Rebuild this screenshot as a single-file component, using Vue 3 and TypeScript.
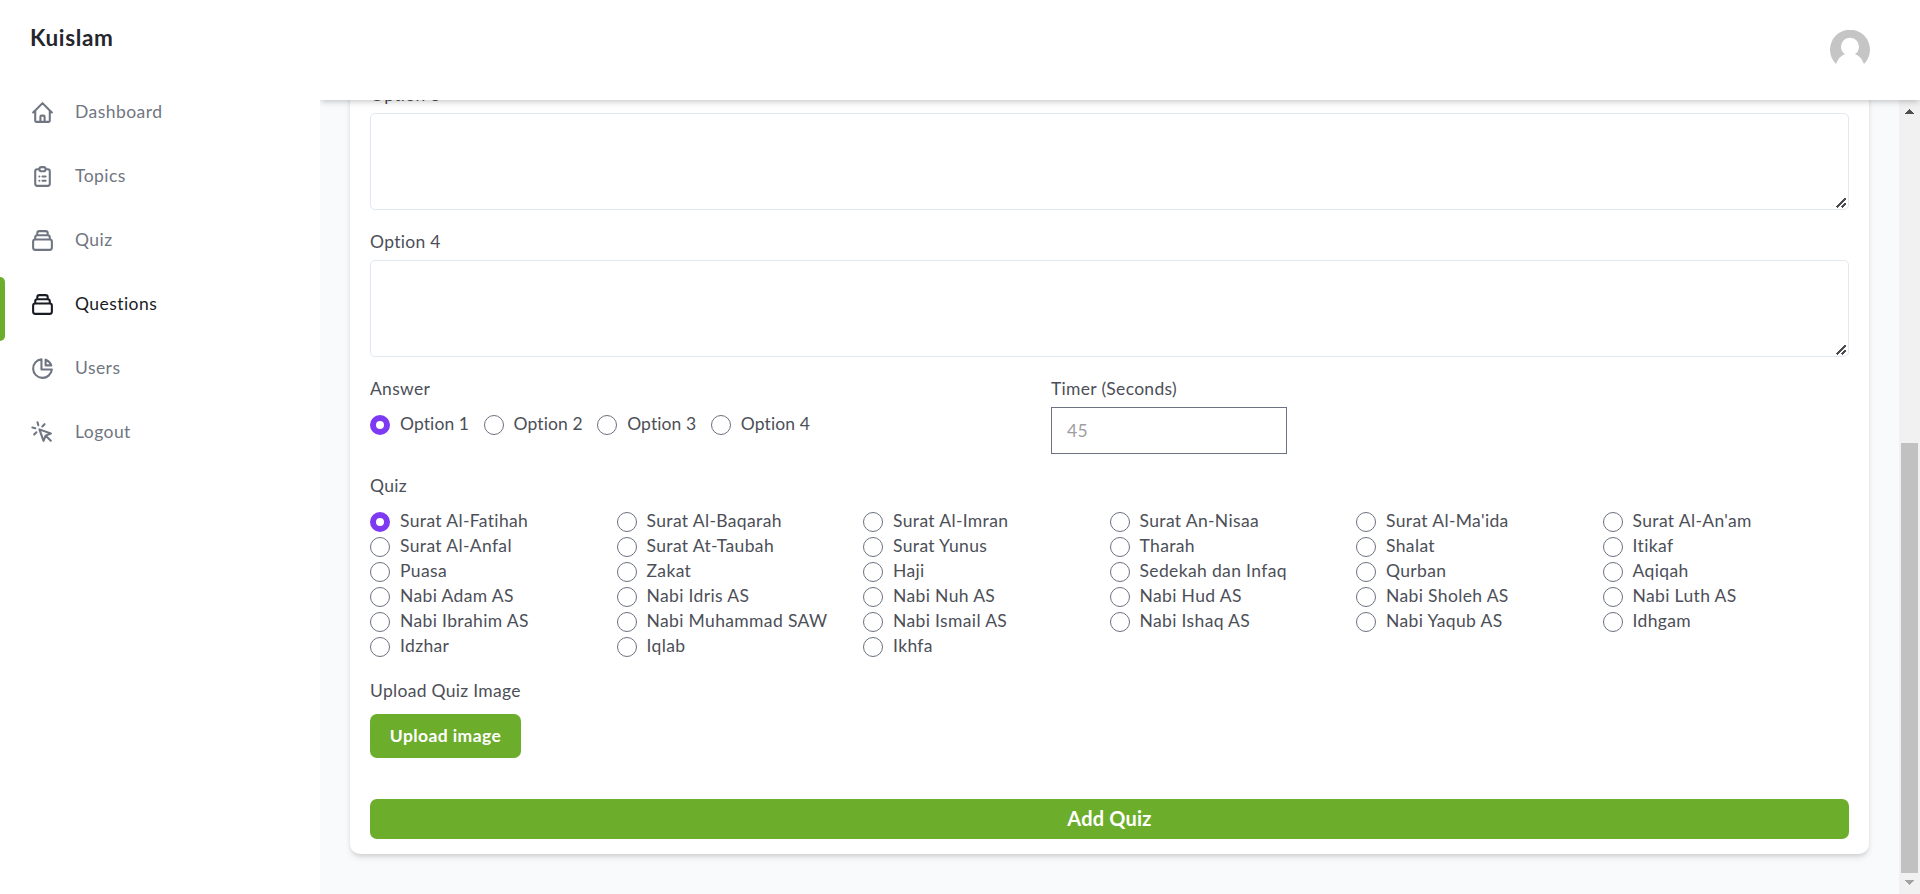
<script setup lang="ts">
import { ref } from 'vue'

interface NavItem {
  label: string
  paths: string[]
}

const collection =
  'M19 11H5m14 0a2 2 0 012 2v6a2 2 0 01-2 2H5a2 2 0 01-2-2v-6a2 2 0 012-2m14 0V9a2 2 0 00-2-2M5 11V9a2 2 0 012-2m0 0V5a2 2 0 012-2h6a2 2 0 012 2v2M7 7h10'

const nav: NavItem[] = [
  {
    label: 'Dashboard',
    paths: [
      'M3 12l2-2m0 0l7-7 7 7M5 10v10a1 1 0 001 1h3m10-11l2 2m-2-2v10a1 1 0 01-1 1h-3m-6 0a1 1 0 001-1v-4a1 1 0 011-1h2a1 1 0 011 1v4a1 1 0 001 1m-6 0h6',
    ],
  },
  {
    label: 'Topics',
    paths: [
      'M9 5H7a2 2 0 00-2 2v12a2 2 0 002 2h10a2 2 0 002-2V7a2 2 0 00-2-2h-2M9 5a2 2 0 002 2h2a2 2 0 002-2M9 5a2 2 0 012-2h2a2 2 0 012 2m-3 7h3m-3 4h3m-6-4h.01M9 16h.01',
    ],
  },
  { label: 'Quiz', paths: [collection] },
  { label: 'Questions', paths: [collection] },
  {
    label: 'Users',
    paths: ['M11 3.055A9.001 9.001 0 1020.945 13H11V3.055z', 'M20.488 9H15V3.512A9.025 9.025 0 0120.488 9z'],
  },
  {
    label: 'Logout',
    paths: [
      'M15 15l-2 5L9 9l11 4-5 2zm0 0l5 5M7.188 2.239l.777 2.897M5.136 7.965l-2.898-.777M13.95 4.05l-2.122 2.122m-5.657 5.656l-2.12 2.122',
    ],
  },
]

const answers = ['Option 1', 'Option 2', 'Option 3', 'Option 4']

const quizzes = [
  'Surat Al-Fatihah', 'Surat Al-Baqarah', 'Surat Al-Imran', 'Surat An-Nisaa', "Surat Al-Ma'ida", "Surat Al-An'am",
  'Surat Al-Anfal', 'Surat At-Taubah', 'Surat Yunus', 'Tharah', 'Shalat', 'Itikaf',
  'Puasa', 'Zakat', 'Haji', 'Sedekah dan Infaq', 'Qurban', 'Aqiqah',
  'Nabi Adam AS', 'Nabi Idris AS', 'Nabi Nuh AS', 'Nabi Hud AS', 'Nabi Sholeh AS', 'Nabi Luth AS',
  'Nabi Ibrahim AS', 'Nabi Muhammad SAW', 'Nabi Ismail AS', 'Nabi Ishaq AS', 'Nabi Yaqub AS', 'Idhgam',
  'Idzhar', 'Iqlab', 'Ikhfa',
]

const active = ref('Questions')
const answer = ref('Option 1')
const quiz = ref('Surat Al-Fatihah')
const options = ref([
  { label: 'Option 3', text: '' },
  { label: 'Option 4', text: '' },
])
const timer = ref('')
</script>

<template>
  <div class="shell">
    <aside class="sidebar">
      <a class="brand">Kuislam</a>
      <ul class="nav">
        <li v-for="item in nav" :key="item.label" class="nav-item" :class="{ active: item.label === active }">
          <span v-if="item.label === active" class="marker"></span>
          <a class="nav-link" @click="active = item.label">
            <svg class="nav-icon" viewBox="0 0 24 24" fill="none" stroke="currentColor" stroke-width="2" stroke-linecap="round" stroke-linejoin="round">
              <path v-for="d in item.paths" :key="d" :d="d" />
            </svg>
            <span class="nav-text">{{ item.label }}</span>
          </a>
        </li>
      </ul>
    </aside>

    <div class="page">
      <header class="topbar">
        <svg class="avatar" viewBox="0 0 40 40">
          <path fill="#c5c5c5" d="M6 34A20 20 0 1 1 34 34Q31 26 25 24.200A9 9 0 1 0 15 24.200Q9 26 6 34Z" />
        </svg>
      </header>

      <div class="body">
        <main class="content">
          <form class="card" @submit.prevent>
            <label v-for="o in options" :key="o.label" class="field">
              <span class="label">{{ o.label }}</span>
              <span class="area-wrap">
                <textarea v-model="o.text" class="area"></textarea>
                <svg class="grip" viewBox="0 0 10 10" shape-rendering="crispEdges">
                  <path stroke="#4a4a4f" stroke-width="1.500" d="M0.500 9.500L9.500 0.500M5.500 9.500L9.500 5.500" />
                </svg>
              </span>
            </label>
            <div class="pair">
              <div>
                <span class="label">Answer</span>
                <div class="answers">
                  <label v-for="a in answers" :key="a" class="choice answer">
                    <input v-model="answer" class="radio" type="radio" name="answer" :value="a" />
                    <span class="choice-text">{{ a }}</span>
                  </label>
                </div>
              </div>
              <label class="timer">
                <span class="label">Timer (Seconds)</span>
                <input v-model="timer" class="number" type="text" placeholder="45" />
              </label>
            </div>
            <div class="quiz">
              <span class="label">Quiz</span>
              <div class="quiz-grid">
                <label v-for="q in quizzes" :key="q" class="choice">
                  <input v-model="quiz" class="radio" type="radio" name="quiz" :value="q" />
                  <span class="choice-text">{{ q }}</span>
                </label>
              </div>
            </div>
            <div class="upload">
              <span class="label">Upload Quiz Image</span>
              <button type="button" class="btn upload-btn">Upload image</button>
            </div>
            <button type="submit" class="btn submit">Add Quiz</button>
          </form>
        </main>
        <div class="scrollbar">
          <svg class="arrow" viewBox="0 0 9 5" shape-rendering="crispEdges"><path fill="#505050" d="M4 0h1v1h1v1h1v1h1v1h1v1H0V4h1V3h1V2h1V1h1z" /></svg>
          <div class="track"><div class="thumb"></div></div>
          <svg class="arrow" viewBox="0 0 9 5" shape-rendering="crispEdges"><path fill="#a3a3a3" d="M0 0h9v1H8v1H7v1H6v1H5v1H4V4H3V3H2V2H1V1H0z" /></svg>
        </div>
      </div>
    </div>
  </div>
</template>

<style>
body {
  margin: 0;
  overflow: hidden;
}
</style>

<style scoped>
* {
  box-sizing: border-box;
}
.shell {
  display: flex;
  height: 894px;
  background: #f9fafb;
  font-family: Lato, 'Open Sans', sans-serif;
  font-size: 17.5px;
  line-height: 25px;
  letter-spacing: 0.3px;
  color: #4c4f58;
}
.sidebar {
  position: relative;
  z-index: 2;
  width: 320px;
  flex: none;
  background: #fff;
  padding-top: 20px;
}
.brand {
  display: block;
  margin-left: 30px;
  height: 65px;
  font-size: 22.5px;
  line-height: 35px;
  letter-spacing: 0.65px;
  font-weight: 700;
  color: #24262d;
}
.nav {
  margin: 0;
  padding: 0;
  list-style: none;
}
.nav-item {
  position: relative;
  height: 64px;
  padding: 15px 0 0 30px;
  color: #707681;
}
.nav-item.active {
  color: #1a1c23;
}
.marker {
  position: absolute;
  inset: 0 auto 0 0;
  width: 5px;
  background: #6cad2b;
  border-radius: 0 5px 5px 0;
}
.nav-link {
  display: flex;
  align-items: center;
  gap: 20px;
  letter-spacing: 0.45px;
}
.nav-text {
  padding-bottom: 1px;
  line-height: 24px;
}
.nav-icon {
  width: 25px;
  height: 25px;
}
.page {
  flex: 1;
  min-width: 0;
  display: flex;
  flex-direction: column;
}
.topbar {
  position: relative;
  z-index: 1;
  height: 100px;
  flex: none;
  padding-right: 50px;
  display: flex;
  align-items: center;
  justify-content: flex-end;
  background: #fff;
  box-shadow: 0 4px 6px -1px rgba(0, 0, 0, 0.13), 0 2px 4px -1px rgba(0, 0, 0, 0.08);
}
.avatar {
  width: 40px;
  height: 40px;
}
.body {
  flex: 1;
  min-height: 0;
  display: flex;
}
.content {
  flex: 1;
  min-width: 0;
  overflow: hidden;
  padding: 0 30px 40px;
  display: flex;
  flex-direction: column;
  justify-content: flex-end;
}
.card {
  flex: none;
  padding: 15px 20px;
  background: #fff;
  border-radius: 10px;
  box-shadow: 0 4px 6px -1px rgba(0, 0, 0, 0.13), 0 2px 4px -1px rgba(0, 0, 0, 0.08);
}
.field {
  display: block;
  margin-bottom: 20px;
}
.label {
  display: block;
  padding-bottom: 1px;
  line-height: 24px;
}
.area-wrap {
  position: relative;
  display: block;
  margin-top: 5px;
}
.area {
  display: block;
  width: 100%;
  height: 97px;
  padding: 10px;
  border: 1px solid #e2e8f0;
  border-radius: 5px;
  background: #fff;
  font: inherit;
  resize: none;
}
.grip {
  position: absolute;
  right: 3px;
  bottom: 2px;
  width: 10px;
  height: 10px;
}
.pair {
  display: grid;
  grid-template-columns: 681px 236px;
}
.answers {
  display: grid;
  grid-template-columns: repeat(4, 113.6px);
  margin-top: 10px;
}
.choice {
  display: flex;
  align-items: center;
  height: 25px;
  white-space: nowrap;
  letter-spacing: 0.36px;
}
.answer {
  letter-spacing: 0.1px;
}
.choice-text {
  padding-bottom: 1px;
  line-height: 24px;
}
.radio {
  appearance: none;
  flex: none;
  width: 20px;
  height: 20px;
  margin: 1px 10px 0 0;
  border: 1px solid #6b7280;
  border-radius: 50%;
  background: #fff;
}
.radio:checked {
  border: 6px solid #7e3af2;
}
.timer {
  display: block;
}
.number {
  display: block;
  width: 236px;
  height: 47px;
  margin-top: 5px;
  padding: 0 15px;
  border: 1px solid #6b7280;
  border-radius: 0;
  background: #fff;
  font: inherit;
  letter-spacing: inherit;
}
.number::placeholder {
  color: #9e9e9e;
}
.quiz {
  margin-top: 20px;
}
.quiz-grid {
  display: grid;
  grid-template-columns: repeat(6, 1fr);
  margin-top: 10px;
}
.upload {
  margin-top: 20px;
}
.btn {
  display: block;
  padding: 0 0 1px;
  border: 0;
  background: #6cad2b;
  color: #fff;
  font: inherit;
  font-weight: 700;
}
.upload-btn {
  width: 151px;
  height: 44px;
  margin-top: 10px;
  border-radius: 7px;
  letter-spacing: 0.4px;
}
.submit {
  width: 100%;
  height: 40px;
  margin-top: 41px;
  border-radius: 7px;
  font-size: 20px;
  letter-spacing: 0.2px;
  padding-bottom: 2px;
}
.scrollbar {
  width: 21px;
  flex: none;
  display: flex;
  flex-direction: column;
  align-items: center;
  justify-content: space-between;
  padding: 9px 0;
  background: #f1f1f1;
}
.arrow {
  width: 9px;
  height: 5px;
}
.track {
  flex: 1;
  width: 17px;
  margin: 7px 0;
  display: flex;
  align-items: flex-end;
}
.thumb {
  width: 17px;
  height: 430px;
  background: #c1c1c1;
}
</style>
